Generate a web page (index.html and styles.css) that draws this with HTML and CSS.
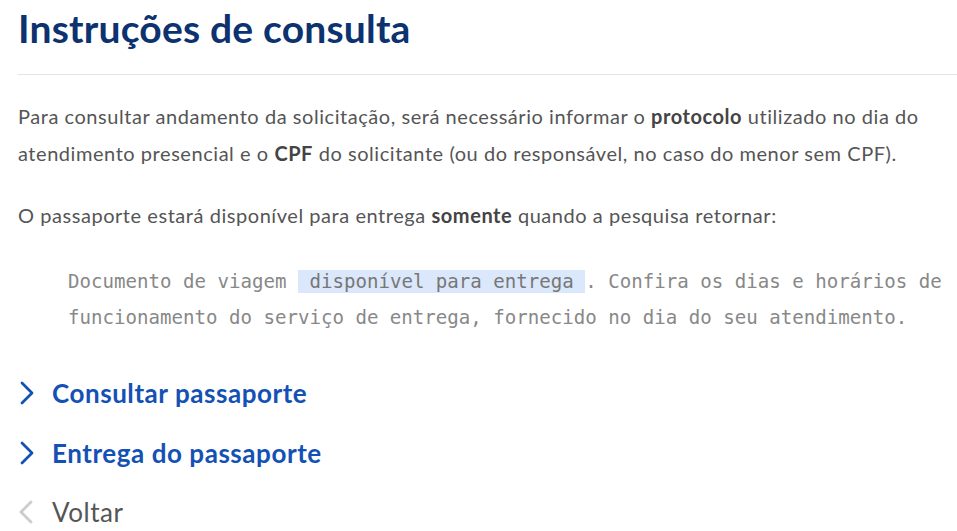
FILE: index.html
```html
<!DOCTYPE html>
<html lang="pt-BR">
  <head>
    <meta charset="UTF-8" />
    <meta name="viewport" content="width=device-width, initial-scale=1.0" />
    <title>Instruções de consulta</title>
    <link rel="stylesheet" href="styles.css">
  </head>
  <body>
    <main class="page">
      <h1 class="page-title">Instruções de consulta</h1>
      <hr class="divider" />

      <p class="text">
        Para consultar andamento da solicitação, será necessário informar o
        <strong>protocolo</strong> utilizado no dia do atendimento presencial e o
        <strong>CPF</strong> do solicitante (ou do responsável, no caso do menor sem CPF).
      </p>
      <p class="text">
        O passaporte estará disponível para entrega <strong>somente</strong> quando a
        pesquisa retornar:
      </p>

      <blockquote class="sample">
        Documento de viagem <span class="mark">&nbsp;disponível para entrega&nbsp;</span>.
        Confira os dias e horários de funcionamento do serviço de entrega, fornecido no
        dia do seu atendimento.
      </blockquote>

      <nav class="links">
        <a class="link" href="#">
          <svg class="chevron" viewBox="0 0 16 24" aria-hidden="true">
            <path d="M4 2 L14 12 L4 22" />
          </svg>
          Consultar passaporte
        </a>
        <a class="link" href="#">
          <svg class="chevron" viewBox="0 0 16 24" aria-hidden="true">
            <path d="M4 2 L14 12 L4 22" />
          </svg>
          Entrega do passaporte
        </a>
        <a class="link link-back" href="#">
          <svg class="chevron" viewBox="0 0 16 24" aria-hidden="true">
            <path d="M13 2 L3 12 L13 22" />
          </svg>
          Voltar
        </a>
      </nav>
    </main>
  </body>
</html>
```

FILE: styles.css
```css
body {
  margin: 0;
  padding: 0;
  background-color: #fff;
  font-family: Lato, "Open Sans", sans-serif;
  color: #555;
}

.page {
  padding: 4px 0 0 18px;
}

.page-title {
  margin: 0;
  font-size: 39px;
  line-height: 48px;
  font-weight: 700;
  letter-spacing: 0.2px;
  color: #0c326f;
}

.divider {
  margin: 22px 0 0;
  border: none;
  border-top: 1px solid #e3e3e3;
}

.text {
  margin: 23px 0 0;
  font-size: 20px;
  line-height: 37px;
  letter-spacing: 0.55px;
  color: #555;
}

.text + .text {
  margin-top: 25px;
}

.text strong {
  color: #444;
  font-weight: 700;
}

.sample {
  margin: 30px 0 0 50px;
  font-family: "DejaVu Sans Mono", "Liberation Mono", monospace;
  font-size: 19.1px;
  line-height: 36px;
  color: #888;
}

.mark {
  background-color: #dbe8fb;
  color: #777;
}

.links {
  display: flex;
  flex-direction: column;
  gap: 23.5px;
  margin-top: 39px;
}

.link {
  display: flex;
  align-items: center;
  gap: 18px;
  font-size: 26px;
  line-height: 36px;
  font-weight: 700;
  letter-spacing: 0.55px;
  color: #1351b4;
  text-decoration: none;
}

.chevron {
  width: 16px;
  height: 24px;
  fill: none;
  stroke: #1351b4;
  stroke-width: 2.8;
  stroke-linecap: round;
  stroke-linejoin: round;
}

.link-back {
  color: #555;
  font-weight: 400;
}

.link-back .chevron {
  stroke: #ccc;
}
```
